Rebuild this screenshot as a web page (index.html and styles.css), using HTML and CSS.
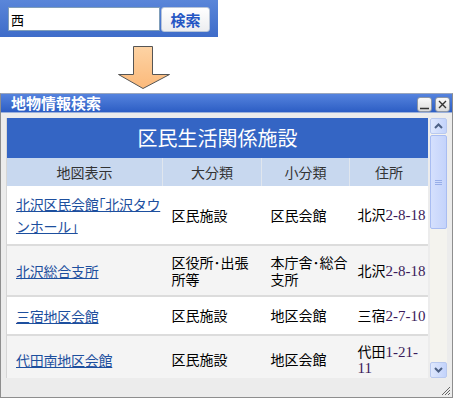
FILE: index.html
```html
<!DOCTYPE html>
<html lang="ja">
<head>
  <meta charset="UTF-8">
  <title>地物情報検索</title>
  <link rel="stylesheet" href="styles.css">
</head>
<body>

  <div class="search-bar">
    <input class="search-input" type="text" value="西">
    <button class="search-btn">検索</button>
  </div>

  <div class="arrow-wrap">
    <svg width="54" height="44" viewBox="0 0 54 44">
      <defs>
        <linearGradient id="ag" x1="0" y1="0" x2="0" y2="1">
          <stop offset="0" stop-color="#fdd3a4"/>
          <stop offset="1" stop-color="#fbb97a"/>
        </linearGradient>
      </defs>
      <path d="M15.5 0.5 H34.5 V28.5 H51.5 L25 42.5 L0.5 28.5 H15.5 Z" fill="url(#ag)" stroke="#555" stroke-width="1"/>
    </svg>
  </div>

  <div class="window">
    <div class="title-bar">
      <span class="title">地物情報検索</span>
      <span class="win-btns">
        <span class="win-btn">
          <svg width="11" height="11" viewBox="0 0 11 11"><path d="M1 9.5 H10" stroke="#333" stroke-width="1.5"/></svg>
        </span>
        <span class="win-btn">
          <svg width="11" height="11" viewBox="0 0 11 11"><path d="M2 2 L9 9 M9 2 L2 9" stroke="#333" stroke-width="1.4"/></svg>
        </span>
      </span>
    </div>

    <div class="body">
      <div class="content">
        <div class="caption">区民生活関係施設</div>
        <table class="list">
          <tr class="head">
            <th class="c1">地図表示</th>
            <th class="c2">大分類</th>
            <th class="c3">小分類</th>
            <th class="c4">住所</th>
          </tr>
          <tr class="odd r1">
            <td><a href="#">北沢区民会館｢北沢タウンホール｣</a></td>
            <td>区民施設</td>
            <td>区民会館</td>
            <td>北沢<span class="num">2-8-18</span></td>
          </tr>
          <tr class="even r2">
            <td><a href="#">北沢総合支所</a></td>
            <td>区役所･出張所等</td>
            <td>本庁舎･総合支所</td>
            <td>北沢<span class="num">2-8-18</span></td>
          </tr>
          <tr class="odd r3">
            <td><a href="#">三宿地区会館</a></td>
            <td>区民施設</td>
            <td>地区会館</td>
            <td>三宿<span class="num">2-7-10</span></td>
          </tr>
          <tr class="even r4">
            <td><a href="#">代田南地区会館</a></td>
            <td>区民施設</td>
            <td>地区会館</td>
            <td>代田<span class="num">1-21-11</span></td>
          </tr>
        </table>
      </div>

      <div class="scrollbar">
        <div class="sb-btn">
          <svg width="9" height="6" viewBox="0 0 9 6"><path d="M1 5 L4.5 1.5 L8 5" fill="none" stroke="#4d6185" stroke-width="2"/></svg>
        </div>
        <div class="sb-thumb">
          <svg width="7" height="7" viewBox="0 0 7 7"><path d="M0 1.5 H7 M0 3.5 H7 M0 5.5 H7" stroke="#98aee8" stroke-width="1"/></svg>
        </div>
        <div class="sb-track"></div>
        <div class="sb-btn">
          <svg width="9" height="6" viewBox="0 0 9 6"><path d="M1 1 L4.5 4.5 L8 1" fill="none" stroke="#4d6185" stroke-width="2"/></svg>
        </div>
      </div>
    </div>

    <div class="footer">
      <svg class="grip" width="11" height="11" viewBox="0 0 11 11"><path d="M10 2 L2 10 M10 5 L5 10 M10 8 L8 10" stroke="#666" stroke-width="1"/></svg>
    </div>
  </div>

</body>
</html>
```

FILE: styles.css
```css
body {
  margin: 0;
  width: 453px;
  height: 398px;
  overflow: hidden;
  background: #fff;
  font-family: "Noto Sans CJK JP", "Noto Sans", sans-serif;
}

.search-bar {
  width: 218px;
  height: 37px;
  box-sizing: border-box;
  padding: 7px 0 0 8px;
  display: flex;
  align-items: flex-start;
  background: linear-gradient(to bottom, #5a86d9, #3e6cc9);
}

.search-input {
  width: 152px;
  height: 24px;
  box-sizing: border-box;
  margin: 0;
  padding: 0 2px;
  border: 1px solid #7f9db9;
  font-family: "Noto Sans CJK JP", sans-serif;
  font-size: 13px;
  color: #000;
  outline: none;
}

.search-btn {
  width: 49px;
  height: 25px;
  margin: 0 0 0 1px;
  padding: 0;
  border: 1px solid #b7c4d8;
  border-radius: 3px;
  background: linear-gradient(to bottom, #ffffff, #ecedf0);
  color: #2456c4;
  font-family: "Noto Sans CJK JP", sans-serif;
  font-size: 15px;
  font-weight: bold;
}

.arrow-wrap {
  width: 290px;
  height: 56px;
  box-sizing: border-box;
  padding-top: 9px;
  display: flex;
  justify-content: center;
}

.window {
  height: 305px;
  box-sizing: border-box;
  border: 1px solid #8e8e8e;
  border-top-color: #9aa6bd;
  background: #ececec;
  display: flex;
  flex-direction: column;
}

.title-bar {
  height: 18px;
  flex: none;
  display: flex;
  align-items: center;
  justify-content: space-between;
  padding: 0 2px 0 10px;
  background: linear-gradient(to bottom, #5583de, #2d5ec4);
  border-bottom: 1px solid #9ab0dc;
}

.title {
  color: #fff;
  font-size: 15px;
  line-height: 18px;
  font-weight: bold;
}

.win-btns {
  display: flex;
  gap: 3px;
  padding-top: 2px;
}

.win-btn {
  width: 15px;
  height: 15px;
  box-sizing: border-box;
  border: 1px solid #8d97a6;
  border-radius: 3px;
  background: linear-gradient(to bottom, #fafafa, #dcdcdc);
  display: flex;
  align-items: center;
  justify-content: center;
}

.body {
  flex: 1;
  display: flex;
  padding: 5px 5px 0 5px;
  min-height: 0;
}

.content {
  width: 422px;
  overflow: hidden;
  background: #f4f4f4;
  border-left: 1px solid #d6d6d6;
}

.caption {
  height: 40px;
  background: #3465c4;
  color: #fff;
  font-size: 20px;
  line-height: 40px;
  text-align: center;
}

.list {
  width: 100%;
  border-collapse: collapse;
  font-size: 14px;
  color: #000;
}

.list th {
  height: 28px;
  padding: 0;
  background: #c8d8ef;
  color: #333;
  font-weight: normal;
  border-left: 1px solid #e0e6ee;
}

.list th.c1 {
  border-left: none;
  width: 155px;
}

.list th.c2 {
  width: 98px;
}

.list th.c3 {
  width: 87px;
}

.list td {
  padding: 0 0 0 9px;
  line-height: 17px;
  border-top: 2px solid #dcdcdc;
  vertical-align: middle;
}

.list tr.head + tr td {
  border-top: none;
}

.list td:first-child {
  line-height: 22px;
  letter-spacing: -0.25px;
}

.list td:last-child {
  padding-left: 8px;
  line-height: 15px;
}

.list tr.r1 {
  height: 59px;
}

.list tr.r2 {
  height: 51px;
}

.list tr.r3 {
  height: 39px;
}

.list tr.r4 {
  height: 48px;
}

.list tr.odd td {
  background: #fff;
}

.list tr.even td {
  background: #f4f4f4;
}

.list a {
  color: #1d4f9e;
  text-decoration: underline;
}

.num {
  font-family: "Liberation Serif", serif;
  font-size: 15px;
  color: #3a1a5a;
}

.scrollbar {
  width: 17px;
  margin-left: 2px;
  display: flex;
  flex-direction: column;
  background: #f4f3ee;
}

.sb-btn {
  height: 16px;
  flex: none;
  box-sizing: border-box;
  border: 1px solid #b9c9ef;
  border-radius: 2px;
  background: linear-gradient(to right, #dfe8fd, #c3d3fb);
  display: flex;
  align-items: center;
  justify-content: center;
}

.sb-thumb {
  height: 94px;
  flex: none;
  margin-top: 1px;
  box-sizing: border-box;
  border: 1px solid #a9bdf2;
  border-radius: 2px;
  background: linear-gradient(to right, #d5e0fd, #c4d3fb);
  display: flex;
  align-items: center;
  justify-content: center;
}

.sb-track {
  flex: 1;
}

.footer {
  height: 18px;
  flex: none;
  display: flex;
  justify-content: flex-end;
  align-items: flex-end;
  padding: 0 1px 1px 0;
}
```
